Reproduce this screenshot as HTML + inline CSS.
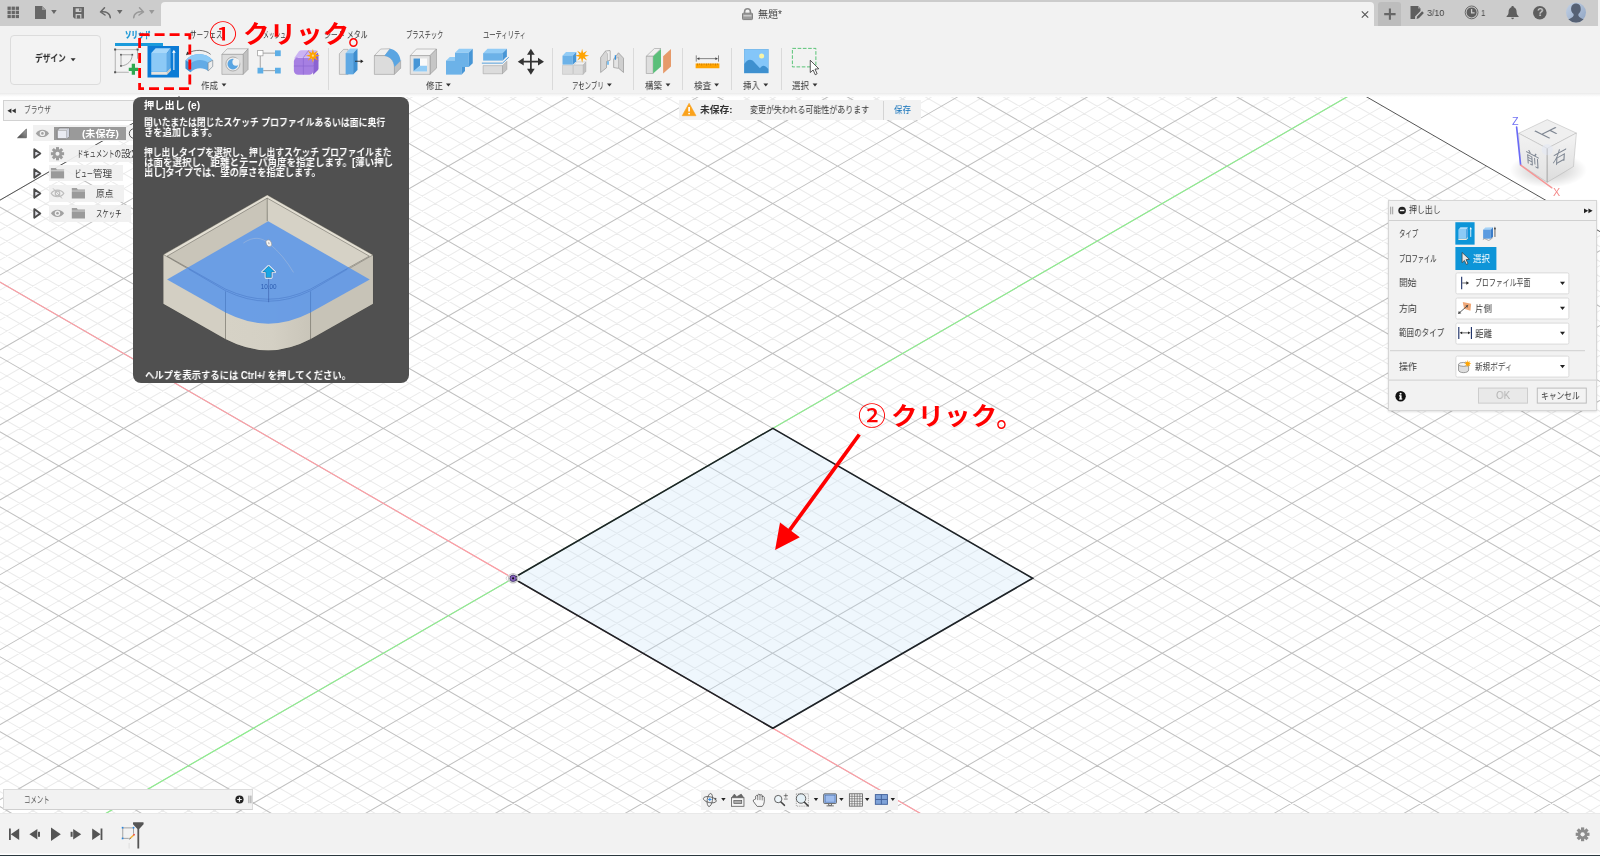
<!DOCTYPE html><html lang="ja"><head><meta charset="utf-8"><title>Fusion 360 - 押し出し</title><style>html,body{margin:0;padding:0;background:#fff;}
body{width:1600px;height:856px;overflow:hidden;font-family:"Liberation Sans","Noto Sans CJK JP",sans-serif;font-size:10px;color:#333;}
#app{position:relative;width:1600px;height:856px;overflow:hidden;background:#fff;}
#app *{box-sizing:border-box;}
.abs{position:absolute;}
svg{display:block;overflow:visible;}
#canvas{position:absolute;left:0;top:0;width:1600px;height:856px;}
#gridsvg{position:absolute;left:0;top:0;}
.t{position:absolute;white-space:nowrap;line-height:1;transform-origin:0 50%;display:block;will-change:transform;}
#topbar{position:absolute;left:0;top:0;width:1598px;height:26px;background:#ccc;}
#rstrip{position:absolute;left:1598px;top:0;width:2px;height:26px;background:#f0f0f0;}
#doctab{position:absolute;left:161px;top:2px;width:1213px;height:24px;background:#f2f2f2;border-radius:4px 4px 0 0;}
#newtab{position:absolute;left:1378px;top:2px;width:23px;height:24px;background:#bdbdbd;border-radius:3px 3px 0 0;}
#toolbar{position:absolute;left:0;top:26px;width:1600px;height:67px;background:#f2f2f2;}
#tbshadow{position:absolute;left:0;top:92.6px;width:1600px;height:4px;background:linear-gradient(#e9e9e9,#f1f1f1 25%,#f8f8f8 60%,#fff);}
#timeline{position:absolute;left:0;top:813px;width:1600px;height:42px;background:#f2f2f2;border-top:1px solid #e9e9e9;}
#botline{position:absolute;left:0;top:853px;width:1600px;height:3px;background:linear-gradient(#f2f2f2 0px,#fdfdfd 0.8px,#ffffff 1.5px,#4a565b 1.9px,#2c3a40 2.3px,#26343a 3px);}
#designbtn{position:absolute;left:10px;top:8.8px;width:90.6px;height:50.2px;border:1px solid #dcdcdc;border-radius:4px;background:#f3f3f3;}
#tabline{position:absolute;left:115px;top:17px;width:47.5px;height:3px;background:#1b9bdb;}
.tsep{position:absolute;top:22px;width:1px;height:42px;background:#dadada;}
#brhead{position:absolute;left:3.2px;top:100px;width:250px;height:20.6px;background:#f2f2f2;border:1px solid #d2d2d2;}
#notice{position:absolute;left:0;top:0;}
#notice::before{content:"";position:absolute;left:679.3px;top:100px;width:241.5px;height:19.8px;background:#f2f2f2;}
#tooltip{position:absolute;left:133px;top:97px;width:276px;height:285.5px;background:#505050;border-radius:8px;}
#ttptr{position:absolute;left:176.5px;top:95.6px;width:0;height:0;border-left:2px solid transparent;border-right:2px solid transparent;border-bottom:2px solid #505050;}
#dialog{position:absolute;left:1388px;top:200px;width:209px;height:211px;background:#f2f2f2;border:1px solid #d6d6d6;box-shadow:0 1px 2px rgba(0,0,0,0.12);}
#dlghead{position:absolute;left:0;top:19.4px;width:208px;height:1px;background:#d0d0d0;}
.dd{position:absolute;background:#fff;border:1px solid #dadada;border-radius:2px;}
.btn{position:absolute;border:1px solid #bbb;}
#comments{position:absolute;left:3px;top:789px;width:250px;height:21px;background:#f2f2f2;border:1px solid #dbdbdb;border-bottom-color:#cfcfcf;}
#navbar{position:absolute;left:701px;top:790px;width:197px;height:20px;background:#f2f2f2;}
#viewcube svg,#tooltip svg{will-change:transform;}
</style></head><body><div id="app">
<div id="canvas"><svg id="gridsvg" width="1600" height="856" viewBox="0 0 1600 856"><defs><clipPath id="gclip"><path d="M-5,202.97L772.70,-246.04L1605,234.49L1605,900L-5,900Z"/></clipPath></defs><g clip-path="url(#gclip)" fill="none"><path d="M-5,-680.06L1605,249.48M-5,-665.07L1605,264.46M-5,-650.08L1605,279.45M-5,-635.09L1605,294.44M-5,-605.12L1605,324.42M-5,-590.13L1605,339.40M-5,-575.14L1605,354.39M-5,-560.15L1605,369.38M-5,-530.18L1605,399.36M-5,-515.19L1605,414.34M-5,-500.20L1605,429.33M-5,-485.21L1605,444.32M-5,-455.24L1605,474.30M-5,-440.25L1605,489.28M-5,-425.26L1605,504.27M-5,-410.27L1605,519.26M-5,-380.30L1605,549.24M-5,-365.31L1605,564.22M-5,-350.32L1605,579.21M-5,-335.33L1605,594.20M-5,-305.36L1605,624.18M-5,-290.37L1605,639.16M-5,-275.38L1605,654.15M-5,-260.39L1605,669.14M-5,-230.42L1605,699.12M-5,-215.43L1605,714.10M-5,-200.44L1605,729.09M-5,-185.45L1605,744.08M-5,-155.48L1605,774.06M-5,-140.49L1605,789.04M-5,-125.50L1605,804.03M-5,-110.51L1605,819.02M-5,-80.54L1605,849.00M-5,-65.55L1605,863.98M-5,-50.56L1605,878.97M-5,-35.57L1605,893.96M-5,-5.60L1605,923.94M-5,9.39L1605,938.92M-5,24.38L1605,953.91M-5,39.37L1605,968.90M-5,69.34L1605,998.88M-5,84.33L1605,1013.86M-5,99.32L1605,1028.85M-5,114.31L1605,1043.84M-5,144.28L1605,1073.82M-5,159.27L1605,1088.80M-5,174.26L1605,1103.79M-5,189.25L1605,1118.78M-5,219.22L1605,1148.76M-5,234.21L1605,1163.74M-5,249.20L1605,1178.73M-5,264.19L1605,1193.72M-5,294.16L1605,1223.70M-5,309.15L1605,1238.68M-5,324.14L1605,1253.67M-5,339.13L1605,1268.66M-5,369.10L1605,1298.64M-5,384.09L1605,1313.62M-5,399.08L1605,1328.61M-5,414.07L1605,1343.60M-5,444.04L1605,1373.58M-5,459.03L1605,1388.56M-5,474.02L1605,1403.55M-5,489.01L1605,1418.54M-5,518.98L1605,1448.52M-5,533.97L1605,1463.50M-5,548.96L1605,1478.49M-5,563.95L1605,1493.48M-5,593.92L1605,1523.46M-5,608.91L1605,1538.44M-5,623.90L1605,1553.43M-5,638.89L1605,1568.42M-5,668.86L1605,1598.40M-5,683.85L1605,1613.38M-5,698.84L1605,1628.37M-5,713.83L1605,1643.36M-5,743.80L1605,1673.34M-5,758.79L1605,1688.32M-5,773.78L1605,1703.31M-5,788.77L1605,1718.30M-5,818.74L1605,1748.28M-5,833.73L1605,1763.26M-5,848.72L1605,1778.25M-5,863.71L1605,1793.24M-5,893.68L1605,1823.22M-5,908.67L1605,1838.20M-5,923.66L1605,1853.19M-5,938.65L1605,1868.18M-5,98.05L1605,-831.48M-5,113.04L1605,-816.50M-5,143.01L1605,-786.52M-5,158.00L1605,-771.53M-5,172.99L1605,-756.54M-5,187.98L1605,-741.56M-5,217.95L1605,-711.58M-5,232.94L1605,-696.59M-5,247.93L1605,-681.60M-5,262.92L1605,-666.62M-5,292.89L1605,-636.64M-5,307.88L1605,-621.65M-5,322.87L1605,-606.66M-5,337.86L1605,-591.68M-5,367.83L1605,-561.70M-5,382.82L1605,-546.71M-5,397.81L1605,-531.72M-5,412.80L1605,-516.74M-5,442.77L1605,-486.76M-5,457.76L1605,-471.77M-5,472.75L1605,-456.78M-5,487.74L1605,-441.80M-5,517.71L1605,-411.82M-5,532.70L1605,-396.83M-5,547.69L1605,-381.84M-5,562.68L1605,-366.86M-5,592.65L1605,-336.88M-5,607.64L1605,-321.89M-5,622.63L1605,-306.90M-5,637.62L1605,-291.92M-5,667.59L1605,-261.94M-5,682.58L1605,-246.95M-5,697.57L1605,-231.96M-5,712.56L1605,-216.98M-5,742.53L1605,-187.00M-5,757.52L1605,-172.01M-5,772.51L1605,-157.02M-5,787.50L1605,-142.04M-5,817.47L1605,-112.06M-5,832.46L1605,-97.07M-5,847.45L1605,-82.08M-5,862.44L1605,-67.10M-5,892.41L1605,-37.12M-5,907.40L1605,-22.13M-5,922.39L1605,-7.14M-5,937.38L1605,7.84M-5,967.35L1605,37.82M-5,982.34L1605,52.81M-5,997.33L1605,67.80M-5,1012.32L1605,82.78M-5,1042.29L1605,112.76M-5,1057.28L1605,127.75M-5,1072.27L1605,142.74M-5,1087.26L1605,157.72M-5,1117.23L1605,187.70M-5,1132.22L1605,202.69M-5,1147.21L1605,217.68M-5,1162.20L1605,232.66M-5,1192.17L1605,262.64M-5,1207.16L1605,277.63M-5,1222.15L1605,292.62M-5,1237.14L1605,307.60M-5,1267.11L1605,337.58M-5,1282.10L1605,352.57M-5,1297.09L1605,367.56M-5,1312.08L1605,382.54M-5,1342.05L1605,412.52M-5,1357.04L1605,427.51M-5,1372.03L1605,442.50M-5,1387.02L1605,457.48M-5,1416.99L1605,487.46M-5,1431.98L1605,502.45M-5,1446.97L1605,517.44M-5,1461.96L1605,532.42M-5,1491.93L1605,562.40M-5,1506.92L1605,577.39M-5,1521.91L1605,592.38M-5,1536.90L1605,607.36M-5,1566.87L1605,637.34M-5,1581.86L1605,652.33M-5,1596.85L1605,667.32M-5,1611.84L1605,682.30M-5,1641.81L1605,712.28M-5,1656.80L1605,727.27M-5,1671.79L1605,742.26M-5,1686.78L1605,757.24M-5,1716.75L1605,787.22M-5,1731.74L1605,802.21M-5,1746.73L1605,817.20" stroke="#ebebeb" stroke-width="1.02"/><path d="M-5,-620.11L1605,309.43M-5,-545.17L1605,384.37M-5,-470.23L1605,459.31M-5,-395.29L1605,534.25M-5,-320.35L1605,609.19M-5,-245.41L1605,684.13M-5,-170.47L1605,759.07M-5,-95.53L1605,834.01M-5,-20.59L1605,908.95M-5,54.35L1605,983.89M-5,129.29L1605,1058.83M-5,204.23L1605,1133.77M-5,279.17L1605,1208.71M-5,354.11L1605,1283.65M-5,429.05L1605,1358.59M-5,503.99L1605,1433.53M-5,578.93L1605,1508.47M-5,653.87L1605,1583.41M-5,728.81L1605,1658.35M-5,803.75L1605,1733.29M-5,878.69L1605,1808.23M-5,128.03L1605,-801.51M-5,202.97L1605,-726.57M-5,277.91L1605,-651.63M-5,352.85L1605,-576.69M-5,427.79L1605,-501.75M-5,502.73L1605,-426.81M-5,577.67L1605,-351.87M-5,652.61L1605,-276.93M-5,727.55L1605,-201.99M-5,802.49L1605,-127.05M-5,877.43L1605,-52.11M-5,952.37L1605,22.83M-5,1027.31L1605,97.77M-5,1102.25L1605,172.71M-5,1177.19L1605,247.65M-5,1252.13L1605,322.59M-5,1327.07L1605,397.53M-5,1402.01L1605,472.47M-5,1476.95L1605,547.41M-5,1551.89L1605,622.35M-5,1626.83L1605,697.29M-5,1701.77L1605,772.23" stroke="#c0c0c0" stroke-width="1.02"/><path d="M-5,279.17L1605,1208.71" stroke="#ff9ca3" stroke-width="1.15"/><path d="M-5,877.43L1605,-52.11" stroke="#8cf08c" stroke-width="1.15"/></g><path d="M-5,-695.05L1605,234.49" stroke="#4c4c4c" stroke-width="0.95" fill="none"/><path d="M-5,202.97L772.70,-246.04" stroke="#4c4c4c" stroke-width="0.95" fill="none"/><path d="M513.10,578.30L772.89,428.31L1032.68,578.30L772.89,728.29Z" fill="rgba(190,224,248,0.25)" stroke="#1d2226" stroke-width="1.6" stroke-linejoin="miter"/><circle cx="513.1" cy="578.3" r="4.6" fill="none" stroke="#c4c4c4" stroke-width="1.2"/><ellipse cx="513.1" cy="578.3" rx="7" ry="3.6" fill="none" stroke="#d6d6d6" stroke-width="1"/><circle cx="513.1" cy="578.3" r="3.2" fill="#8a63c0" stroke="#3a3060" stroke-width="0.8"/><circle cx="513.1" cy="578.3" r="1.1" fill="#111"/></svg></div>
<div id="topbar"><svg class="abs" style="left:7px;top:6px;" width="13" height="14" viewBox="-0.50 -0.60 13 14"><rect x="0.0" y="0.0" width="3.3" height="3.3" fill="#676767"/><rect x="4.1" y="0.0" width="3.3" height="3.3" fill="#676767"/><rect x="8.2" y="0.0" width="3.3" height="3.3" fill="#676767"/><rect x="0.0" y="4.1" width="3.3" height="3.3" fill="#676767"/><rect x="4.1" y="4.1" width="3.3" height="3.3" fill="#676767"/><rect x="8.2" y="4.1" width="3.3" height="3.3" fill="#676767"/><rect x="0.0" y="8.2" width="3.3" height="3.3" fill="#676767"/><rect x="4.1" y="8.2" width="3.3" height="3.3" fill="#676767"/><rect x="8.2" y="8.2" width="3.3" height="3.3" fill="#676767"/></svg><svg class="abs" style="left:35px;top:6px;" width="12" height="14" viewBox="0.00 0.00 12 14"><path d="M0,0H7L11,4V13H0Z" fill="#676767"/><path d="M7,0V4H11" fill="#9a9a9a"/></svg><svg class="abs" style="left:51px;top:10px;" width="7" height="5" viewBox="-0.20 0.00 7 5"><path d="M0,0H5.5L2.75,4Z" fill="#676767"/></svg><svg class="abs" style="left:73px;top:7px;" width="12" height="13" viewBox="0.00 0.00 12 13"><path d="M0,0H11V11.5H1.5L0,10Z" fill="#676767"/><rect x="2.6" y="1.4" width="5.8" height="3.6" fill="#ccc"/><rect x="6.2" y="1.4" width="1.3" height="2.6" fill="#676767"/><rect x="2.6" y="7" width="5.8" height="4.5" fill="#ccc"/><rect x="3.8" y="8.2" width="3.4" height="3.3" fill="#676767"/></svg><svg class="abs" style="left:99px;top:6px;" width="15" height="15" viewBox="0.00 0.00 15 15"><path d="M5.5,1.8L1.5,6L6,9M1.8,6C7,5.2 11,7 11.3,11.8" fill="none" stroke="#676767" stroke-width="1.5" stroke-linejoin="round" stroke-linecap="round"/></svg><svg class="abs" style="left:117px;top:10px;" width="7" height="5" viewBox="0.00 0.00 7 5"><path d="M0,0H5.5L2.75,4Z" fill="#676767"/></svg><svg class="abs" style="left:132px;top:6px;" width="15" height="15" viewBox="0.00 0.00 15 15"><path d="M7.5,1.8L11.5,6L7,9M11.2,6C6,5.2 2,7 1.7,11.8" fill="none" stroke="#989898" stroke-width="1.5" stroke-linejoin="round" stroke-linecap="round"/></svg><svg class="abs" style="left:149px;top:10px;" width="7" height="5" viewBox="0.00 0.00 7 5"><path d="M0,0H5.5L2.75,4Z" fill="#989898"/></svg><div id="doctab"></div><svg class="abs" style="left:742px;top:8px;" width="12" height="13" viewBox="0.00 0.00 12 13"><path d="M2.6,5.5V3.6A2.9,2.9 0 0 1 8.4,3.6V5.5" fill="none" stroke="#8a8a8a" stroke-width="1.6"/><rect x="0.5" y="5.2" width="10" height="6.4" rx="0.8" fill="#9b9b9b" stroke="#808080" stroke-width="1"/><rect x="1.5" y="7.2" width="8" height="1.2" fill="#d6d6d6"/></svg><span class="t" style="left:758.2px;top:10.1px;font-size:10px;font-weight:400;color:#444;transform:scaleX(1.004);">無題*</span><svg class="abs" style="left:1361px;top:11px;" width="9" height="8" viewBox="-0.50 0.00 9 8"><path d="M0.3,0.3L6.7,6.7M6.7,0.3L0.3,6.7" stroke="#555" stroke-width="1.1" fill="none"/></svg><div id="newtab"></div><svg class="abs" style="left:1384px;top:8px;" width="13" height="13" viewBox="-0.20 -0.40 13 13"><path d="M5.7,0V11.4M0,5.7H11.4" stroke="#666" stroke-width="2.1" fill="none"/></svg><svg class="abs" style="left:1410px;top:6px;" width="15" height="14" viewBox="-0.50 0.00 15 14"><path d="M0,0H7.5L10,2.6V5L4.6,10.6V13H0Z" fill="#5e5e5e"/><path d="M6,12.9L6.6,10.4L11.6,5.2L13.4,6.9L8.4,12.2Z" fill="#5e5e5e"/><path d="M7.5,0V2.6H10" fill="#9a9a9a"/></svg><span class="t" style="left:1426.6px;top:8.1px;font-size:9.5px;font-weight:400;color:#444;font-family:'Liberation Sans',sans-serif;transform:scaleX(0.930);">3/10</span><svg class="abs" style="left:1464px;top:5px;" width="16" height="16" viewBox="-0.60 -0.40 16 16"><circle cx="7" cy="7" r="6.4" fill="none" stroke="#5e5e5e" stroke-width="0.9"/><circle cx="7" cy="7" r="5" fill="#5e5e5e"/><path d="M7,3.6V7.4H10" stroke="#ccc" stroke-width="1.3" fill="none"/></svg><span class="t" style="left:1480.8px;top:8.1px;font-size:9.5px;font-weight:400;color:#444;font-family:'Liberation Sans',sans-serif;transform:scaleX(0.831);">1</span><svg class="abs" style="left:1506px;top:6px;" width="14" height="15" viewBox="-0.60 0.00 14 15"><path d="M6,0C6.9,0 7.2,0.6 7.2,1.2C9.4,1.9 10,4 10,6C10,8.4 11,9.3 12,10.2V11H0V10.2C1,9.3 2,8.4 2,6C2,4 2.6,1.9 4.8,1.2C4.8,0.6 5.1,0 6,0Z" fill="#5e5e5e"/><path d="M4.6,11.8H7.4A1.4,1.4 0 0 1 4.6,11.8Z" fill="#5e5e5e"/></svg><svg class="abs" style="left:1533px;top:6px;" width="15" height="15" viewBox="0.00 0.00 15 15"><circle cx="6.8" cy="6.8" r="6.8" fill="#5e5e5e"/></svg><span class="t" style="left:1536.6px;top:7.2px;font-size:11.5px;font-weight:700;color:#ccc;font-family:'Liberation Sans',sans-serif;transform:scaleX(0.939);">?</span><svg class="abs" style="left:1565px;top:2px;" width="23" height="22" viewBox="-0.80 -0.40 23 22"><defs><linearGradient id="avg" x1="0" y1="0" x2="1" y2="1"><stop offset="0" stop-color="#c3d2e6"/><stop offset="1" stop-color="#8ea3c2"/></linearGradient><clipPath id="avc"><circle cx="10.2" cy="10.2" r="10"/></clipPath></defs><circle cx="10.2" cy="10.2" r="10" fill="url(#avg)"/><g clip-path="url(#avc)" fill="#566174"><path d="M10.2,1.2C13.6,1 15.2,3.8 14.9,6.4C15.2,8.2 14.4,10.2 12.6,11.6V13.4C13.4,15.4 16.4,16.4 18.6,17.2V21H1.8V17.2C4,16.4 7,15.4 7.8,13.4V11.6C5.6,10.4 5,7.4 5.4,5.4C5.6,2.8 7.6,1.2 10.2,1.2Z"/></g></svg></div><div id="rstrip"></div>
<div id="toolbar"><div id="designbtn"></div><span class="t" style="left:35.0px;top:27.8px;font-size:10px;font-weight:700;color:#2e2e2e;transform:scaleX(0.770);">デザイン</span><svg class="abs" style="left:70px;top:32px;" width="7" height="5" viewBox="-0.60 -0.20 7 5"><path d="M0,0H5L2.5,3Z" fill="#2e2e2e"/></svg><span class="t" style="left:125.0px;top:4.0px;font-size:9.5px;font-weight:700;color:#0890d4;transform:scaleX(0.673);-webkit-text-stroke:0.35px #0890d4;">ソリッド</span><div id="tabline"></div><span class="t" style="left:190.0px;top:4.0px;font-size:9.5px;font-weight:400;color:#3a3a3a;transform:scaleX(0.692);">サーフェス</span><span class="t" style="left:263.0px;top:4.0px;font-size:9.5px;font-weight:400;color:#3a3a3a;transform:scaleX(0.605);">メッシュ</span><span class="t" style="left:324.0px;top:4.0px;font-size:9.5px;font-weight:400;color:#3a3a3a;transform:scaleX(0.729);">シート メタル</span><span class="t" style="left:405.6px;top:4.0px;font-size:9.5px;font-weight:400;color:#3a3a3a;transform:scaleX(0.658);">プラスチック</span><span class="t" style="left:483.0px;top:4.0px;font-size:9.5px;font-weight:400;color:#3a3a3a;transform:scaleX(0.658);">ユーティリティ</span><span class="t" style="left:201.0px;top:54.8px;font-size:9.5px;font-weight:400;color:#3a3a3a;transform:scaleX(0.894);">作成</span><svg class="abs" style="left:221px;top:57px;" width="7" height="5" viewBox="-0.60 -0.40 7 5"><path d="M0,0H4.8L2.4,3.2Z" fill="#333"/></svg><span class="t" style="left:425.6px;top:54.8px;font-size:9.5px;font-weight:400;color:#3a3a3a;transform:scaleX(0.889);">修正</span><svg class="abs" style="left:446px;top:57px;" width="6" height="5" viewBox="0.00 -0.40 6 5"><path d="M0,0H4.8L2.4,3.2Z" fill="#333"/></svg><span class="t" style="left:572.0px;top:54.8px;font-size:9.5px;font-weight:400;color:#3a3a3a;transform:scaleX(0.676);">アセンブリ</span><svg class="abs" style="left:607px;top:57px;" width="6" height="5" viewBox="0.00 -0.40 6 5"><path d="M0,0H4.8L2.4,3.2Z" fill="#333"/></svg><span class="t" style="left:645.0px;top:54.8px;font-size:9.5px;font-weight:400;color:#3a3a3a;transform:scaleX(0.894);">構築</span><svg class="abs" style="left:665px;top:57px;" width="7" height="5" viewBox="-0.60 -0.40 7 5"><path d="M0,0H4.8L2.4,3.2Z" fill="#333"/></svg><span class="t" style="left:693.8px;top:54.8px;font-size:9.5px;font-weight:400;color:#3a3a3a;transform:scaleX(0.905);">検査</span><svg class="abs" style="left:714px;top:57px;" width="7" height="5" viewBox="-0.20 -0.40 7 5"><path d="M0,0H4.8L2.4,3.2Z" fill="#333"/></svg><span class="t" style="left:743.0px;top:54.8px;font-size:9.5px;font-weight:400;color:#3a3a3a;transform:scaleX(0.894);">挿入</span><svg class="abs" style="left:763px;top:57px;" width="7" height="5" viewBox="-0.40 -0.40 7 5"><path d="M0,0H4.8L2.4,3.2Z" fill="#333"/></svg><span class="t" style="left:792.0px;top:54.8px;font-size:9.5px;font-weight:400;color:#3a3a3a;transform:scaleX(0.894);">選択</span><svg class="abs" style="left:812px;top:57px;" width="7" height="5" viewBox="-0.60 -0.40 7 5"><path d="M0,0H4.8L2.4,3.2Z" fill="#333"/></svg><div class="tsep" style="left:328.0px"></div><div class="tsep" style="left:552.0px"></div><div class="tsep" style="left:632.5px"></div><div class="tsep" style="left:681.5px"></div><div class="tsep" style="left:731.0px"></div><div class="tsep" style="left:780.5px"></div><svg class="abs" style="left:113px;top:21px;" width="27" height="29" viewBox="113 47 27 29"><g transform="translate(0,0) scale(0.12500)"><path d="M922,397H1100V470M922,397V578H1030" fill="none" stroke="#8a8a8a" stroke-width="5"/><rect x="913" y="388" width="16" height="16" fill="#555"/><rect x="1093" y="388" width="16" height="16" fill="#555"/><rect x="913" y="570" width="16" height="16" fill="#555"/><path d="M968,438H1058C1056,490 1020,522 968,528Z" fill="none" stroke="#7c7c7c" stroke-width="5"/><rect x="961" y="431" width="13" height="13" fill="#555"/><rect x="1052" y="431" width="13" height="13" fill="#555"/><rect x="961" y="521" width="13" height="13" fill="#555"/><path d="M1067,510V598M1030,554H1105" stroke="#2fa84f" stroke-width="26" fill="none"/></g></svg><svg class="abs" style="left:147px;top:20px;" width="32" height="32" viewBox="147 46 32 32"><g transform="translate(0,0) scale(0.12500)"><rect x="1180" y="368" width="252" height="252" fill="#0c7bd5"/><path d="M1210,424L1245,386L1365,386L1335,424Z" fill="#a8d8fa" /><path d="M1210,424L1335,424L1335,575L1210,575Z" fill="#8cc9f6" /><path d="M1335,424L1365,386L1365,545L1335,575Z" fill="#5eaae6" /><path d="M1210,575L1335,575L1365,545L1365,565L1335,598L1210,598Z" fill="#e8e4de" /><path d="M1335,575L1365,545L1365,565L1335,598Z" fill="#cdc9c2" /><path d="M1391,560V415" stroke="#fff" stroke-width="8" fill="none"/><path d="M1376,422L1391,398L1406,422Z" fill="#fff"/></g></svg><svg class="abs" style="left:185px;top:21px;" width="29" height="28" viewBox="185 47 29 28"><g transform="translate(180,20) scale(0.12500)"><path d="M45,322C100,255 205,255 262,322L262,372L225,408C190,375 120,378 85,418L45,388Z" fill="#62abe6"/><path d="M45,322C100,255 205,255 262,322L225,342C190,310 120,312 85,348Z" fill="#8ccaf6"/><path d="M45,322L85,348V418L45,388Z" fill="#3f8dd0"/><path d="M225,342L262,322L262,372L225,408Z" fill="#ececec" stroke="#777" stroke-width="4" stroke-linejoin="round" /><path d="M62,268C115,232 200,235 245,275" fill="none" stroke="#333" stroke-width="5"/><path d="M48,282L58,252L80,272Z" fill="#333"/></g></svg><svg class="abs" style="left:221px;top:21px;" width="28" height="29" viewBox="221 47 28 29"><g transform="translate(180,20) scale(0.12500)"><path d="M335,275L378,230L545,230L505,275Z" fill="#efefef" stroke="#8c8c8c" stroke-width="4" stroke-linejoin="round" /><path d="M505,275L545,230L545,395L505,435Z" fill="#c2c2c2" stroke="#8c8c8c" stroke-width="4" stroke-linejoin="round" /><path d="M335,275L505,275L505,435L335,435Z" fill="#dcdcdc" stroke="#8c8c8c" stroke-width="4" stroke-linejoin="round" /><circle cx="423" cy="352" r="56" fill="#ececec" stroke="#8c8c8c" stroke-width="5"/><circle cx="423" cy="352" r="43" fill="#5aa5e2"/><circle cx="448" cy="336" r="29" fill="#f2f2f2"/></g></svg><svg class="abs" style="left:257px;top:23px;" width="25" height="26" viewBox="257 49 25 26"><g transform="translate(180,20) scale(0.12500)"><path d="M665,265H760M642,288V382M665,405H760" stroke="#555" stroke-width="4" fill="none"/><rect x="622" y="245" width="42" height="42" fill="#fff" stroke="#777" stroke-width="4"/><rect x="760" y="243" width="46" height="46" fill="#5daee6"/><rect x="620" y="382" width="46" height="46" fill="#5daee6"/><rect x="760" y="382" width="46" height="46" fill="#5daee6"/></g></svg><svg class="abs" style="left:292px;top:20px;" width="29" height="30" viewBox="292 46 29 30"><g transform="translate(180,20) scale(0.12500)"><path d="M1065,300L1098,262Q1108,262 1108,282V385Q1108,396 1100,404L1065,437Z" fill="#8b62d2"/><path d="M913,305L950,252Q958,242 975,242H1085Q1106,242 1098,264L1065,302Z" fill="#cbb3f3"/><rect x="911" y="298" width="156" height="139" rx="34" fill="#a67fe2"/><path d="M940,300H1040Q1066,300 1067,330" fill="none" stroke="#dccdf8" stroke-width="6"/><path d="M987,300V437M911,368H1067M1067,368L1108,325M1030,242L987,300" stroke="#8a63cf" stroke-width="5" fill="none"/><path d="M1063.0,229.0L1071.4,264.7L1102.6,245.4L1083.3,276.6L1119.0,285.0L1083.3,293.4L1102.6,324.6L1071.4,305.3L1063.0,341.0L1054.6,305.3L1023.4,324.6L1042.7,293.4L1007.0,285.0L1042.7,276.6L1023.4,245.4L1054.6,264.7Z" fill="#ffa400" /><circle cx="1063" cy="285" r="9" fill="#ffd98a"/></g></svg><svg class="abs" style="left:338px;top:21px;" width="27" height="29" viewBox="338 47 27 29"><g transform="translate(180,20) scale(0.12500)"><path d="M1275,270L1308,235L1345,235L1345,435L1275,435Z" fill="#e2e2e2" stroke="#8c8c8c" stroke-width="4" stroke-linejoin="round" /><path d="M1325,265L1360,228L1420,228L1385,265Z" fill="#92ccf6" /><path d="M1325,265L1385,265L1385,435L1325,435Z" fill="#5fa9e4" /><path d="M1385,265L1420,228L1420,400L1385,435Z" fill="#3f8fd0" /><path d="M1400,330H1450" stroke="#222" stroke-width="7"/><path d="M1445,315L1468,330L1445,345Z" fill="#222"/></g></svg><svg class="abs" style="left:373px;top:21px;" width="29" height="29" viewBox="373 47 29 29"><g transform="translate(360,20) scale(0.12500)"><path d="M115,285L165,232L240,230L200,285Z" fill="#efefef" stroke="#8c8c8c" stroke-width="4" stroke-linejoin="round" /><path d="M275,375L325,325V385L275,435Z" fill="#c2c2c2" stroke="#8c8c8c" stroke-width="4"/><path d="M115,285H195C240,290 272,325 275,375V435H115Z" fill="#dcdcdc" stroke="#8c8c8c" stroke-width="4"/><path d="M195,285C240,290 272,325 275,375L325,325C318,272 285,238 240,230Z" fill="#5aa5e2"/></g></svg><svg class="abs" style="left:409px;top:21px;" width="30" height="29" viewBox="409 47 30 29"><g transform="translate(360,20) scale(0.12500)"><path d="M402,285L452,232L612,232L560,285Z" fill="#f4f4f4" stroke="#8c8c8c" stroke-width="4" stroke-linejoin="round" /><path d="M560,285L612,232L612,385L560,435Z" fill="#c6c6c6" stroke="#8c8c8c" stroke-width="4" stroke-linejoin="round" /><path d="M402,285L560,285L560,435L402,435Z" fill="#e4e4e4" stroke="#8c8c8c" stroke-width="4" stroke-linejoin="round" /><rect x="428" y="308" width="108" height="104" fill="#fafafa"/><path d="M428,308L480,308L480,365L428,412Z" fill="#4796d6" /><path d="M428,412L480,365L536,365L536,412Z" fill="#92ccf6" /></g></svg><svg class="abs" style="left:445px;top:21px;" width="29" height="29" viewBox="445 47 29 29"><g transform="translate(360,20) scale(0.12500)"><path d="M760,262L792,230L902,230L870,262Z" fill="#92ccf6" /><path d="M760,262L870,262L870,375L760,375Z" fill="#6cb2e8" /><path d="M870,262L902,230L902,345L870,375Z" fill="#4796d6" /><path d="M688,325L718,295L760,295L760,325Z" fill="#92ccf6" /><path d="M688,325L812,325L812,437L688,437Z" fill="#6cb2e8" /><path d="M812,375L840,347L840,408L812,437Z" fill="#4796d6" /><path d="M760,325L812,325L812,375L870,375L870,345L760,345Z" fill="#6cb2e8" /></g></svg><svg class="abs" style="left:481px;top:21px;" width="29" height="29" viewBox="481 47 29 29"><g transform="translate(360,20) scale(0.12500)"><path d="M985,265L1020,230L1175,230L1140,265Z" fill="#92ccf6" /><path d="M985,265L1140,265L1140,325L985,325Z" fill="#6cb2e8" /><path d="M1140,265L1175,230L1175,290L1140,325Z" fill="#4796d6" /><path d="M985,365L1140,365L1140,430L985,430Z" fill="#dcdcdc" stroke="#9a9a9a" stroke-width="4" stroke-linejoin="round" /><path d="M1140,365L1175,330L1175,395L1140,430Z" fill="#c2c2c2" stroke="#9a9a9a" stroke-width="4" stroke-linejoin="round" /><path d="M975,345H1140L1190,298" fill="none" stroke="#3f93d8" stroke-width="7"/></g></svg><svg class="abs" style="left:517px;top:21px;" width="28" height="29" viewBox="517 47 28 29"><g transform="translate(360,20) scale(0.12500)"><path d="M1367,270V395M1305,333H1430" stroke="#333" stroke-width="14" fill="none"/><path d="M1367,230L1398,278H1336ZM1367,438L1398,390H1336ZM1262,333L1310,302V364ZM1472,333L1424,302V364Z" fill="#333"/></g></svg><svg class="abs" style="left:561px;top:21px;" width="29" height="29" viewBox="561 47 29 29"><g transform="translate(540,20) scale(0.12500)"><path d="M180,285L208,255L290,255L262,285Z" fill="#92ccf6" /><path d="M180,285L262,285L262,357L180,357Z" fill="#6cb2e8" /><path d="M262,285L290,255L290,330L262,357Z" fill="#4796d6" /><path d="M268,360L295,335L368,335L345,360Z" fill="#f2f2f2" stroke="#aaa" stroke-width="3" stroke-linejoin="round" /><path d="M345,360L368,335L368,410L345,435Z" fill="#c2c2c2" stroke="#aaa" stroke-width="3" stroke-linejoin="round" /><path d="M180,362L262,362L262,435L180,435Z" fill="#dcdcdc" stroke="#aaa" stroke-width="3" stroke-linejoin="round" /><path d="M268,362L345,362L345,435L268,435Z" fill="#dcdcdc" stroke="#aaa" stroke-width="3" stroke-linejoin="round" /><path d="M337.0,229.0L345.4,264.7L376.6,245.4L357.3,276.6L393.0,285.0L357.3,293.4L376.6,324.6L345.4,305.3L337.0,341.0L328.6,305.3L297.4,324.6L316.7,293.4L281.0,285.0L316.7,276.6L297.4,245.4L328.6,264.7Z" fill="#ffa400" /></g></svg><svg class="abs" style="left:599px;top:22px;" width="26" height="27" viewBox="599 48 26 27"><g transform="translate(540,20) scale(0.12500)"><path d="M485,300L522,250L560,245L560,322L532,332L532,382L485,420Z" fill="#d6d6d6" stroke="#8c8c8c" stroke-width="5" stroke-linejoin="round" /><path d="M522,250L560,245L560,322L540,325L540,270Z" fill="#eee" stroke="#8c8c8c" stroke-width="3" stroke-linejoin="round" /><path d="M590,312L628,262L668,305L668,420L628,385L590,380Z" fill="#cfcfcf" stroke="#8c8c8c" stroke-width="5" stroke-linejoin="round" /><path d="M590,312L628,300L628,385L590,380Z" fill="#e4e4e4" stroke="#8c8c8c" stroke-width="3" stroke-linejoin="round" /><rect x="538" y="330" width="12" height="28" fill="#58b0f0"/><rect x="598" y="282" width="10" height="36" fill="#2f8fe0"/></g></svg><svg class="abs" style="left:645px;top:21px;" width="27" height="29" viewBox="645 47 27 29"><g transform="translate(540,20) scale(0.12500)"><path d="M850,290L915,228L968,228L905,290Z" fill="#f0f0f0" stroke="#8c8c8c" stroke-width="4" stroke-linejoin="round" /><path d="M850,290L905,290L905,428L850,428Z" fill="#dedede" stroke="#8c8c8c" stroke-width="4" stroke-linejoin="round" /><path d="M905,290L968,232L968,372L905,428Z" fill="#5bbf7a" /><path d="M985,290L1048,232L1048,372L985,428Z" fill="#e69a6a" /></g></svg><svg class="abs" style="left:695px;top:28px;" width="25" height="16" viewBox="695 54 25 16"><g transform="translate(540,20) scale(0.12500)"><rect x="1245" y="348" width="190" height="38" fill="#ffa400"/><rect x="1256" y="348" width="5" height="16" fill="#b86e00"/><rect x="1274" y="348" width="5" height="10" fill="#b86e00"/><rect x="1292" y="348" width="5" height="16" fill="#b86e00"/><rect x="1310" y="348" width="5" height="10" fill="#b86e00"/><rect x="1328" y="348" width="5" height="16" fill="#b86e00"/><rect x="1346" y="348" width="5" height="10" fill="#b86e00"/><rect x="1364" y="348" width="5" height="16" fill="#b86e00"/><rect x="1382" y="348" width="5" height="10" fill="#b86e00"/><rect x="1400" y="348" width="5" height="16" fill="#b86e00"/><rect x="1418" y="348" width="5" height="10" fill="#b86e00"/><path d="M1250,283V333M1428,283V333M1262,309H1416" stroke="#444" stroke-width="5" fill="none"/><path d="M1254,309L1275,298V320ZM1424,309L1403,298V320Z" fill="#444"/></g></svg><svg class="abs" style="left:743px;top:22px;" width="26" height="26" viewBox="743 48 26 26"><g transform="translate(720,20) scale(0.12500)"><rect x="194" y="234" width="192" height="190" fill="#84c6f9" stroke="#5aa7e3" stroke-width="4"/><path d="M194,424V352C222,310 252,306 282,346L320,386C336,360 356,356 386,392V424Z" fill="#3e90cf"/><circle cx="333" cy="288" r="20" fill="#f8f4a6"/></g></svg><svg class="abs" style="left:791px;top:21px;" width="30" height="30" viewBox="791 47 30 30"><g transform="translate(720,20) scale(0.12500)"><rect x="579" y="227" width="188" height="148" fill="none" stroke="#43bd65" stroke-width="7" stroke-dasharray="29 13"/><path d="M722,322V420L745,400L762,438L777,430L760,393L790,390Z" fill="#fff" stroke="#222" stroke-width="6" stroke-linejoin="round"/></g></svg></div><div id="tbshadow"></div>
<div id="browser"><div id="brhead"></div><svg class="abs" style="left:7px;top:108px;" width="10" height="7" viewBox="-0.40 -0.40 10 7"><path d="M4,0V4.8L0,2.4ZM8.4,0V4.8L4.4,2.4Z" fill="#333"/></svg><span class="t" style="left:23.6px;top:105.0px;font-size:9.5px;font-weight:400;color:#555;transform:scaleX(0.708);">ブラウザ</span><div class="abs" style="left:33.1px;top:124.9px;width:110px;height:16.6px;background:rgba(240,240,240,0.93)"></div><svg class="abs" style="left:17px;top:128px;" width="11" height="12" viewBox="-0.20 -0.80 11 12"><defs><linearGradient id="trg" x1="0" y1="1" x2="1" y2="0"><stop offset="0" stop-color="#444"/><stop offset="1" stop-color="#aaa"/></linearGradient></defs><path d="M0.3,9H9.2V0.2Z" fill="url(#trg)" stroke="#444" stroke-width="0.6"/></svg><svg class="abs" style="left:35px;top:129px;" width="15" height="10" viewBox="-0.80 -0.60 15 10"><path d="M0,3.8C3,-1 10.2,-1 13.2,3.8C10.2,8.6 3,8.6 0,3.8Z" fill="#a2a2a2"/><circle cx="6.6" cy="3.8" r="2.7" fill="#f0f0f0"/><circle cx="6.6" cy="3.8" r="1.3" fill="#a2a2a2"/></svg><div class="abs" style="left:54px;top:127.1px;width:71.8px;height:12.5px;background:#9a9a9a"></div><svg class="abs" style="left:56px;top:127px;" width="15" height="14" viewBox="-0.70 -0.60 15 14"><path d="M0.5,2.6L3,0.4H12.3V8.6L9.8,11.2H0.5Z" fill="#e9ebf2" stroke="#7a7a7a" stroke-width="0.9" stroke-linejoin="round"/><path d="M0.5,2.6H9.8V11.2M9.8,2.6L12.3,0.4" fill="none" stroke="#9a9a9a" stroke-width="0.8"/><path d="M9.8,2.6L12.3,0.4V8.6L9.8,11.2Z" fill="#cfd3de"/></svg><span class="t" style="left:82.0px;top:128.7px;font-size:9.5px;font-weight:700;color:#fff;transform:scaleX(1.057);">(未保存)</span><svg class="abs" style="left:128px;top:128px;" width="13" height="12" viewBox="-0.60 0.00 13 12"><circle cx="5.5" cy="5.5" r="4.8" fill="#f4f4f4" stroke="#555" stroke-width="1"/></svg><div class="abs" style="left:48.5px;top:145.2px;width:97px;height:16.5px;background:rgba(240,240,240,0.93)"></div><svg class="abs" style="left:33px;top:147px;" width="10" height="14" viewBox="-0.00 -0.90 10 14"><path d="M1.3,1.3L7.3,5.6L1.3,9.9Z" fill="#e2e2ea" stroke="#4a4a4a" stroke-width="1.9" stroke-linejoin="round"/></svg><svg class="abs" style="left:50px;top:147px;" width="16" height="15" viewBox="-0.90 -0.10 16 15"><g transform="translate(6.6,6.6)"><rect x="-1.5" y="-6.6" width="3" height="3.2" fill="#9c9c9c" transform="rotate(0)"/><rect x="-1.5" y="-6.6" width="3" height="3.2" fill="#9c9c9c" transform="rotate(45)"/><rect x="-1.5" y="-6.6" width="3" height="3.2" fill="#9c9c9c" transform="rotate(90)"/><rect x="-1.5" y="-6.6" width="3" height="3.2" fill="#9c9c9c" transform="rotate(135)"/><rect x="-1.5" y="-6.6" width="3" height="3.2" fill="#9c9c9c" transform="rotate(180)"/><rect x="-1.5" y="-6.6" width="3" height="3.2" fill="#9c9c9c" transform="rotate(225)"/><rect x="-1.5" y="-6.6" width="3" height="3.2" fill="#9c9c9c" transform="rotate(270)"/><rect x="-1.5" y="-6.6" width="3" height="3.2" fill="#9c9c9c" transform="rotate(315)"/><circle r="4.6" fill="#9c9c9c"/><circle r="2" fill="#f0f0f0"/></g></svg><span class="t" style="left:76.7px;top:148.7px;font-size:9.5px;font-weight:400;color:#3a3a3a;transform:scaleX(0.660);">ドキュメントの</span><span class="t" style="left:121.0px;top:148.7px;font-size:9.5px;font-weight:400;color:#3a3a3a;transform:scaleX(1.052);">設定</span><div class="abs" style="left:48.5px;top:165.2px;width:74.6px;height:16.2px;background:rgba(240,240,240,0.93)"></div><svg class="abs" style="left:33px;top:167px;" width="10" height="14" viewBox="-0.00 -0.90 10 14"><path d="M1.3,1.3L7.3,5.6L1.3,9.9Z" fill="#e2e2ea" stroke="#4a4a4a" stroke-width="1.9" stroke-linejoin="round"/></svg><svg class="abs" style="left:50px;top:168px;" width="16" height="12" viewBox="-0.90 -0.00 16 12"><path d="M0,0H5L6,1.4H13.2V2.6H0Z" fill="#a0a0a0"/><rect x="0" y="3.2" width="13.2" height="7.2" fill="#9a9a9a"/></svg><span class="t" style="left:74.8px;top:168.7px;font-size:9.5px;font-weight:400;color:#3a3a3a;transform:scaleX(0.624);">ビュー</span><span class="t" style="left:93.4px;top:168.7px;font-size:9.5px;font-weight:400;color:#3a3a3a;transform:scaleX(1.010);">管理</span><div class="abs" style="left:48.5px;top:185px;width:75.2px;height:16.6px;background:rgba(240,240,240,0.93)"></div><svg class="abs" style="left:33px;top:187px;" width="10" height="14" viewBox="-0.00 -0.90 10 14"><path d="M1.3,1.3L7.3,5.6L1.3,9.9Z" fill="#e2e2ea" stroke="#4a4a4a" stroke-width="1.9" stroke-linejoin="round"/></svg><svg class="abs" style="left:50px;top:189px;" width="16" height="10" viewBox="-0.90 -0.60 16 10"><path d="M0.3,3.8C3,-0.6 10.2,-0.6 12.9,3.8C10.2,8.2 3,8.2 0.3,3.8Z" fill="none" stroke="#bdbdbd" stroke-width="1.1"/><circle cx="6.6" cy="3.8" r="2.2" fill="none" stroke="#bdbdbd" stroke-width="1.3"/><path d="M2.2,-1.2L11,8.8" stroke="#bdbdbd" stroke-width="1"/></svg><svg class="abs" style="left:71px;top:188px;" width="15" height="12" viewBox="-0.80 -0.10 15 12"><path d="M0,0H5L6,1.4H13.2V2.6H0Z" fill="#a0a0a0"/><rect x="0" y="3.2" width="13.2" height="7.2" fill="#9a9a9a"/></svg><span class="t" style="left:96.3px;top:188.7px;font-size:9.5px;font-weight:400;color:#3a3a3a;transform:scaleX(0.905);">原点</span><div class="abs" style="left:48.5px;top:205.3px;width:82.5px;height:16.5px;background:rgba(240,240,240,0.93)"></div><svg class="abs" style="left:33px;top:207px;" width="10" height="14" viewBox="-0.00 -0.80 10 14"><path d="M1.3,1.3L7.3,5.6L1.3,9.9Z" fill="#e2e2ea" stroke="#4a4a4a" stroke-width="1.9" stroke-linejoin="round"/></svg><svg class="abs" style="left:50px;top:209px;" width="16" height="10" viewBox="-0.90 -0.50 16 10"><path d="M0,3.8C3,-1 10.2,-1 13.2,3.8C10.2,8.6 3,8.6 0,3.8Z" fill="#a2a2a2"/><circle cx="6.6" cy="3.8" r="2.7" fill="#f0f0f0"/><circle cx="6.6" cy="3.8" r="1.3" fill="#a2a2a2"/></svg><svg class="abs" style="left:71px;top:208px;" width="15" height="12" viewBox="-0.80 -0.10 15 12"><path d="M0,0H5L6,1.4H13.2V2.6H0Z" fill="#a0a0a0"/><rect x="0" y="3.2" width="13.2" height="7.2" fill="#9a9a9a"/></svg><span class="t" style="left:96.3px;top:208.6px;font-size:9.5px;font-weight:400;color:#3a3a3a;transform:scaleX(0.671);">スケッチ</span></div>
<div id="notice"><svg class="abs" style="left:682px;top:103px;" width="16" height="14" viewBox="0.00 0.00 16 14"><path d="M7.1,0.3L14,12.7H0.2Z" fill="#faa21b" stroke="#faa21b" stroke-width="0.6" stroke-linejoin="round"/><path d="M7.1,4V8.6" stroke="#fff" stroke-width="1.7"/><circle cx="7.1" cy="10.6" r="0.95" fill="#fff"/></svg><span class="t" style="left:700.0px;top:105.2px;font-size:9.5px;font-weight:700;color:#333;transform:scaleX(1.029);">未保存:</span><span class="t" style="left:749.8px;top:105.2px;font-size:9.5px;font-weight:400;color:#333;transform:scaleX(0.839);">変更が失われる可能性があります</span><div class="abs" style="left:883px;top:100.5px;width:1px;height:19px;background:#d4d4d4"></div><span class="t" style="left:894.0px;top:105.2px;font-size:9.5px;font-weight:400;color:#1271ba;transform:scaleX(0.894);">保存</span></div>
<div id="tooltip"><span class="t" style="left:11.3px;top:3.6px;font-size:10px;font-weight:700;color:#fff;transform:scaleX(1.022);">押し出し (e)</span><span class="t" style="left:11.3px;top:21.2px;font-size:10px;font-weight:700;color:#fff;transform:scaleX(0.885);">開いたまたは閉じたスケッチ プロファイルあるいは面に奥行</span><span class="t" style="left:11.3px;top:31.3px;font-size:10px;font-weight:700;color:#fff;transform:scaleX(0.927);">きを追加します。</span><span class="t" style="left:11.3px;top:51.1px;font-size:10px;font-weight:700;color:#fff;transform:scaleX(0.875);">押し出しタイプを選択し、押し出すスケッチ プロファイルまた</span><span class="t" style="left:11.3px;top:61.1px;font-size:10px;font-weight:700;color:#fff;transform:scaleX(0.950);">は面を選択し、距離とテーパ角度を指定します。[薄い押し</span><span class="t" style="left:11.3px;top:71.1px;font-size:10px;font-weight:700;color:#fff;transform:scaleX(0.919);">出し]タイプでは、壁の厚さを指定します。</span><span class="t" style="left:11.5px;top:273.8px;font-size:10px;font-weight:700;color:#fff;transform:scaleX(0.933);">ヘルプを表示するには Ctrl+/ を押してください。</span><svg class="abs" style="left:27px;top:95px;" width="216" height="160" viewBox="160 192 216 160"><g transform="translate(150,185) scale(0.19869)"><defs><linearGradient id="cw" x1="0" y1="0" x2="1" y2="0"><stop offset="0" stop-color="#d6d2c6"/><stop offset="0.55" stop-color="#d4d0c4"/><stop offset="1" stop-color="#c9c5b9"/></linearGradient></defs><path d="M590,50L1122,352V598L808,775Q700,832 595,832Q490,832 380,775L68,598V350Z" fill="#d3cfc3" stroke="#4a4a46" stroke-width="3" stroke-linejoin="round"/><path d="M590,64L84,357L84,480L595,185Z" fill="#c9c5b9" /><path d="M590,64L1106,357L1106,480L595,185Z" fill="#d6d2c6" /><path d="M68,352L380,532L380,775L68,598Z" fill="#d3cfc3" /><path d="M1122,354L808,532L808,775L1122,598Z" fill="#c7c3b7" /><path d="M380,532Q490,585 595,585Q700,585 808,532V775Q700,832 595,832Q490,832 380,775Z" fill="url(#cw)"/><path d="M68,350L590,50L1122,352L808,532Q700,585 595,585Q490,585 380,532Z M86,358L380,524Q490,575 595,575Q700,575 808,524L1104,358L590,66Z" fill="#e3dfd3" fill-rule="evenodd" stroke="#55534c" stroke-width="2.4" stroke-linejoin="round"/><path d="M590,66V182M380,536V775M808,536V775" stroke="#55534c" stroke-width="2.6" fill="none"/><path d="M595,182L1106,476L808,642Q700,698 595,698Q490,698 380,642L86,476Z" fill="#5f98e8" fill-opacity="0.9"/><path d="M188,416L380,524Q490,575 595,575Q700,575 808,524L1000,416" fill="none" stroke="#3f6fc0" stroke-width="2.2" stroke-opacity="0.8"/><path d="M196,424L380,532Q490,585 595,585Q700,585 808,532L992,424" fill="none" stroke="#3f6fc0" stroke-width="2.2" stroke-opacity="0.8"/><path d="M380,536V642M808,536V642" stroke="#3d6ab4" stroke-width="2.6" fill="none" stroke-opacity="0.8"/><path d="M470,292C520,258 560,262 600,295C650,335 690,385 722,440" fill="none" stroke="#c8ccd4" stroke-width="2.2" stroke-opacity="0.8"/><ellipse cx="598" cy="293" rx="13" ry="18" fill="#f4f4f4" stroke="#888" stroke-width="2.5" transform="rotate(-25 598 293)"/><ellipse cx="598" cy="293" rx="4" ry="6" fill="#bbb" transform="rotate(-25 598 293)"/><path d="M597,470V590" stroke="#2c4f9a" stroke-width="2.4"/><path d="M597,408L628,438H611V466H583V438H566Z" fill="#18a6e4" stroke="#fff" stroke-width="11" stroke-linejoin="round"/><path d="M597,408L628,438H611V466H583V438H566Z" fill="#18a6e4" stroke="#123a70" stroke-width="2.2" stroke-linejoin="round"/><text x="597" y="523" font-size="32" text-anchor="middle" fill="#2c5cb0" font-family="Liberation Sans, sans-serif">10.00</text></g></svg></div><div id="ttptr"></div>
<div id="viewcube"><svg class="abs" style="left:1505px;top:112px;" width="88" height="88" viewBox="1505 112 88 88"><g transform="translate(1490,100) scale(0.11677)"><defs><radialGradient id="vcs" cx="0.5" cy="0.5" r="0.5"><stop offset="0" stop-color="#000" stop-opacity="0.22"/><stop offset="0.6" stop-color="#000" stop-opacity="0.1"/><stop offset="1" stop-color="#000" stop-opacity="0"/></radialGradient><linearGradient id="vcf" x1="0" y1="0" x2="0" y2="1"><stop offset="0" stop-color="#f2f2f2"/><stop offset="1" stop-color="#e2e2e2"/></linearGradient><linearGradient id="vcr" x1="0" y1="0" x2="0" y2="1"><stop offset="0" stop-color="#f4f4f4"/><stop offset="1" stop-color="#dcdcdc"/></linearGradient></defs><ellipse cx="500" cy="600" rx="330" ry="150" fill="url(#vcs)"/><path d="M490,168L740,283L490,415L245,285Z" fill="#efefef" stroke="#9a9a9a" stroke-width="3" stroke-linejoin="round" /><path d="M245,285L490,415L490,705L262,555Z" fill="url(#vcf)" stroke="#9a9a9a" stroke-width="3" stroke-linejoin="round" /><path d="M490,415L740,283L715,570L490,705Z" fill="url(#vcr)" stroke="#9a9a9a" stroke-width="3" stroke-linejoin="round" /><circle cx="490" cy="425" r="48" fill="#e4e8f2" fill-opacity="0.7"/><path d="M490,415V705" stroke="#8a8a8a" stroke-width="3"/><path d="M228,232L262,555" stroke="#6a6af6" stroke-width="14" stroke-linecap="round"/><path d="M262,558L530,752" stroke="#f69696" stroke-width="12" stroke-linecap="round"/><text transform="matrix(0.9,0.48,0.06,1,300,400)" x="0" y="125" font-size="135" fill="#7e8692" font-family="Liberation Sans, Noto Sans CJK JP, sans-serif" font-weight="400">前</text><text transform="matrix(0.9,-0.5,-0.06,1,540,440)" x="0" y="125" font-size="135" fill="#7e8692" font-family="Liberation Sans, Noto Sans CJK JP, sans-serif" font-weight="400">右</text><text transform="matrix(0.88,0.44,-0.92,0.45,492,205)" x="0" y="125" font-size="160" fill="#7e8692" font-family="Liberation Sans, Noto Sans CJK JP, sans-serif" font-weight="400">上</text><text x="188" y="212" font-size="92" fill="#7272f4" font-family="Liberation Sans, sans-serif">Z</text><text x="540" y="822" font-size="92" fill="#f48a8a" font-family="Liberation Sans, sans-serif">X</text></g></svg></div>
<div id="dialog"><div id="dlghead"></div><svg class="abs" style="left:1px;top:5px;" width="5" height="10" viewBox="-0.30 -0.70 5 10"><path d="M0.4,0V7.6M2.4,0V7.6" stroke="#888" stroke-width="0.8"/></svg><svg class="abs" style="left:9px;top:5px;" width="9" height="10" viewBox="-0.30 -0.70 9 10"><circle cx="3.8" cy="3.8" r="3.8" fill="#222"/><rect x="1.6" y="3.1" width="4.4" height="1.4" fill="#f2f2f2"/></svg><span class="t" style="left:19.9px;top:4.4px;font-size:9.5px;font-weight:400;color:#3a3a3a;transform:scaleX(0.831);">押し出し</span><svg class="abs" style="left:195px;top:7px;" width="10" height="7" viewBox="0.00 -0.40 10 7"><path d="M0,0L4.2,2.4L0,4.8ZM4.4,0L8.6,2.4L4.4,4.8Z" fill="#222"/></svg><span class="t" style="left:9.6px;top:27.6px;font-size:9.5px;font-weight:400;color:#3a3a3a;transform:scaleX(0.673);">タイプ</span><span class="t" style="left:9.6px;top:52.9px;font-size:9.5px;font-weight:400;color:#3a3a3a;transform:scaleX(0.656);">プロファイル</span><span class="t" style="left:9.6px;top:77.4px;font-size:9.5px;font-weight:400;color:#3a3a3a;transform:scaleX(0.915);">開始</span><span class="t" style="left:9.6px;top:102.6px;font-size:9.5px;font-weight:400;color:#3a3a3a;transform:scaleX(0.941);">方向</span><span class="t" style="left:9.6px;top:127.4px;font-size:9.5px;font-weight:400;color:#3a3a3a;transform:scaleX(0.793);">範囲のタイプ</span><span class="t" style="left:9.6px;top:161.1px;font-size:9.5px;font-weight:400;color:#3a3a3a;transform:scaleX(0.941);">操作</span><svg class="abs" style="left:66px;top:21px;" width="20" height="23" viewBox="1455 222 20 23"><g transform="translate(1380,195) scale(0.13749)"><rect x="548" y="198" width="140" height="163" fill="#0d95d8"/><path d="M570,252L585,235L640,235L628,252Z" fill="#b4defa" /><path d="M570,252L628,252L628,318L570,318Z" fill="#8ccaf6" /><path d="M628,252L640,235L640,305L628,318Z" fill="#5aa8e4" /><path d="M570,318L628,318L640,305L640,314L628,328L570,328Z" fill="#ece8dc" /><path d="M660,305V245" stroke="#fff" stroke-width="6"/><path d="M652,250L660,232L668,250Z" fill="#fff"/></g></svg><svg class="abs" style="left:93px;top:25px;" width="15" height="15" viewBox="1482 226 15 15"><g transform="translate(1380,195) scale(0.13749)"><path d="M750,252L766,237L822,235L806,252Z" fill="#a4d2f7" /><path d="M750,252L806,252L806,318L750,318Z" fill="#5b9be0" /><path d="M806,252L822,235L822,302L806,318Z" fill="#3a7cc8" /><path d="M748,324q14,-13 28,0q14,13 28,0l18,-16" fill="none" stroke="#8a8a8a" stroke-width="5"/><path d="M836,305V245" stroke="#222" stroke-width="5"/><path d="M829,250L836,230L843,250Z" fill="#222"/></g></svg><div class="abs" style="left:0;top:0;width:40.8px;height:22.5px;transform:translate(66.40px,46.00px);background:#0d95d8"></div><svg class="abs" style="left:71px;top:50px;" width="11" height="15" viewBox="1460 251 11 15"><g transform="translate(1380,195) scale(0.13749)"><path d="M597,418V492L614,476L628,505L640,499L626,470L650,468Z" fill="#e8e8e8" stroke="#333" stroke-width="5" stroke-linejoin="round"/></g></svg><span class="t" style="left:84.2px;top:52.6px;font-size:9.5px;font-weight:400;color:#fff;transform:scaleX(0.883);">選択</span><div class="dd" style="left:0;top:0;width:114.2px;height:22.0px;transform:translate(66.40px,71.40px);"></div><svg class="abs" style="left:171px;top:80px;" width="6" height="5" viewBox="0.00 -0.75 6 5"><path d="M0,0H5L2.5,3.2Z" fill="#222"/></svg><div class="dd" style="left:0;top:0;width:114.2px;height:22.0px;transform:translate(66.40px,96.50px);"></div><svg class="abs" style="left:171px;top:105px;" width="6" height="5" viewBox="0.00 -0.80 6 5"><path d="M0,0H5L2.5,3.2Z" fill="#222"/></svg><div class="dd" style="left:0;top:0;width:114.2px;height:22.0px;transform:translate(66.40px,121.60px);"></div><svg class="abs" style="left:171px;top:130px;" width="6" height="6" viewBox="0.00 -0.85 6 6"><path d="M0,0H5L2.5,3.2Z" fill="#222"/></svg><div class="dd" style="left:0;top:0;width:114.2px;height:22.0px;transform:translate(66.40px,154.60px);"></div><svg class="abs" style="left:171px;top:163px;" width="6" height="6" viewBox="0.00 -0.95 6 6"><path d="M0,0H5L2.5,3.2Z" fill="#222"/></svg><svg class="abs" style="left:71px;top:75px;" width="10" height="14" viewBox="1460 276 10 14"><g transform="translate(1380,195) scale(0.13749)"><path d="M594,595V685" stroke="#1c2f66" stroke-width="8"/><path d="M598,640H632" stroke="#222" stroke-width="5"/><path d="M628,628L648,640L628,652Z" fill="#222"/></g></svg><span class="t" style="left:85.6px;top:77.4px;font-size:9.5px;font-weight:400;color:#3a3a3a;transform:scaleX(0.729);">プロファイル平面</span><svg class="abs" style="left:68px;top:99px;" width="15" height="16" viewBox="1457 300 15 16"><g transform="translate(1380,295) scale(0.14021)"><path d="M590,50L650,62L645,112L600,98Z" fill="#f0a878" /><path d="M565,128L622,78" stroke="#444" stroke-width="6"/><path d="M556,136L562,114L580,130Z" fill="#444"/><path d="M630,70L610,76L622,92Z" fill="#444"/></g></svg><span class="t" style="left:86.0px;top:102.6px;font-size:9.5px;font-weight:400;color:#3a3a3a;transform:scaleX(0.894);">片側</span><svg class="abs" style="left:68px;top:125px;" width="16" height="14" viewBox="1457 326 16 14"><g transform="translate(1380,295) scale(0.14021)"><path d="M562,228V313M652,228V313" stroke="#1c2f66" stroke-width="8"/><path d="M580,270H634" stroke="#222" stroke-width="5"/><path d="M568,270L586,260V280ZM646,270L628,260V280Z" fill="#222"/></g></svg><span class="t" style="left:86.0px;top:127.6px;font-size:9.5px;font-weight:400;color:#3a3a3a;transform:scaleX(0.894);">距離</span><svg class="abs" style="left:68px;top:158px;" width="15" height="15" viewBox="1457 359 15 15"><g transform="translate(1380,295) scale(0.14021)"><path d="M560,495V535C560,560 632,560 632,535V495" fill="#dedede" stroke="#777" stroke-width="5"/><ellipse cx="596" cy="495" rx="36" ry="14" fill="#f4f4f4" stroke="#777" stroke-width="5"/><path d="M626.0,464.0L630.6,478.9L644.4,471.6L637.1,485.4L652.0,490.0L637.1,494.6L644.4,508.4L630.6,501.1L626.0,516.0L621.4,501.1L607.6,508.4L614.9,494.6L600.0,490.0L614.9,485.4L607.6,471.6L621.4,478.9Z" fill="#ffa400" /></g></svg><span class="t" style="left:86.0px;top:160.9px;font-size:9.5px;font-weight:400;color:#3a3a3a;transform:scaleX(0.801);">新規ボディ</span><div class="abs" style="left:0;top:0;width:195.0px;height:1.0px;transform:translate(1.00px,149.20px);background:#cfcfcf"></div><div class="abs" style="left:0;top:0;width:207.0px;height:1.0px;transform:translate(0.00px,178.60px);background:#cfcfcf"></div><svg class="abs" style="left:6px;top:190px;" width="12" height="12" viewBox="-0.40 0.00 12 12"><circle cx="5.2" cy="5.2" r="5.2" fill="#111"/><rect x="4.3" y="4.3" width="1.9" height="4" fill="#fff"/><rect x="3.6" y="4.3" width="1.6" height="1" fill="#fff"/><rect x="3.6" y="7.5" width="3.3" height="1" fill="#fff"/><circle cx="5.2" cy="2.7" r="1.05" fill="#fff"/></svg><div class="btn" style="left:0;top:0;width:50.0px;height:16.0px;transform:translate(89.00px,186.60px);background:#e9e9e9;border-color:#cdcdcd"></div><span class="t" style="left:106.7px;top:189.4px;font-size:10.5px;font-weight:400;color:#b4b4b4;font-family:'Liberation Sans',sans-serif;transform:scaleX(0.929);">OK</span><div class="btn" style="left:0;top:0;width:50.0px;height:16.0px;transform:translate(147.80px,186.60px);background:#f3f3f3;border-color:#bdbdbd"></div><span class="t" style="left:152.3px;top:189.9px;font-size:9.5px;font-weight:400;color:#3a3a3a;transform:scaleX(0.814);">キャンセル</span></div>
<div id="comments"><span class="t" style="left:19.8px;top:4.5px;font-size:9.5px;font-weight:400;color:#555;transform:scaleX(0.673);">コメント</span><svg class="abs" style="left:231px;top:5px;" width="10" height="10" viewBox="-0.40 -0.40 10 10"><circle cx="4.1" cy="4.1" r="4.1" fill="#222"/><path d="M4.1,1.8V6.4M1.8,4.1H6.4" stroke="#f2f2f2" stroke-width="1.2"/></svg><svg class="abs" style="left:244px;top:5px;" width="5" height="10" viewBox="-0.40 -0.60 5 10"><path d="M0.5,0V7.6M2.5,0V7.6" stroke="#888" stroke-width="0.8"/></svg></div><div id="navbar"><svg class="abs" style="left:1px;top:2px;" width="17" height="16" viewBox="702 792 17 16"><g transform="translate(695,782) scale(0.13125)"><ellipse cx="113" cy="135" rx="50" ry="22" fill="none" stroke="#555" stroke-width="6" transform="rotate(12 113 135)"/><ellipse cx="113" cy="137" rx="20" ry="50" fill="none" stroke="#555" stroke-width="6" transform="rotate(8 113 137)"/><path d="M113,120V146M100,133H126" stroke="#2a86e0" stroke-width="7"/><path d="M150,118L166,128L150,140Z" fill="#555"/></g></svg><svg class="abs" style="left:29px;top:3px;" width="16" height="15" viewBox="730 793 16 15"><g transform="translate(695,782) scale(0.13125)"><path d="M278,120L300,92L318,112L352,92L372,120" fill="#666" stroke="#555" stroke-width="4"/><rect x="278" y="120" width="95" height="65" fill="#f4f4f4" stroke="#555" stroke-width="6"/><rect x="296" y="140" width="60" height="24" fill="#aaa" stroke="#555" stroke-width="5"/></g></svg><svg class="abs" style="left:51px;top:2px;" width="15" height="16" viewBox="752 792 15 16"><g transform="translate(695,782) scale(0.13125)"><path d="M462,130V108Q470,96 478,108V98Q487,86 495,98V100Q504,90 512,102V112Q522,104 528,116V150Q526,172 512,186H474Q460,170 444,146Q442,134 452,134Z" fill="#f6f6f6" stroke="#444" stroke-width="5.5" stroke-linejoin="round"/><path d="M478,108V138M495,100V138M512,104V140" stroke="#444" stroke-width="5"/></g></svg><svg class="abs" style="left:72px;top:2px;" width="16" height="16" viewBox="773 792 16 16"><g transform="translate(695,782) scale(0.13125)"><circle cx="634" cy="130" r="28" fill="#eef6fa" stroke="#555" stroke-width="7"/><path d="M655,152L682,178" stroke="#444" stroke-width="11" stroke-linecap="round"/><path d="M692,88V120M676,104H708M678,130H706" stroke="#444" stroke-width="5"/></g></svg><svg class="abs" style="left:94px;top:2px;" width="16" height="16" viewBox="795 792 16 16"><g transform="translate(695,782) scale(0.13125)"><rect x="772" y="90" width="92" height="94" fill="none" stroke="#555" stroke-width="4" stroke-dasharray="7 7"/><circle cx="808" cy="126" r="36" fill="#e4f0f6" stroke="#555" stroke-width="7"/><path d="M834,154L862,182" stroke="#444" stroke-width="12" stroke-linecap="round"/></g></svg><svg class="abs" style="left:121px;top:2px;" width="17" height="16" viewBox="822 792 17 16"><g transform="translate(695,782) scale(0.13125)"><rect x="980" y="90" width="98" height="74" rx="8" fill="#8fb0e0" stroke="#666" stroke-width="7"/><rect x="992" y="101" width="74" height="52" fill="#9dbcee" stroke="#4468a8" stroke-width="3"/><path d="M1018,166V178H1040V166M1002,182H1058" stroke="#666" stroke-width="7" fill="none"/></g></svg><svg class="abs" style="left:147px;top:2px;" width="16" height="16" viewBox="848 792 16 16"><g transform="translate(695,782) scale(0.13125)"><rect x="1176" y="90" width="100" height="94" fill="#f4f4f4" stroke="#555" stroke-width="6"/><path d="M1196,90V184" stroke="#666" stroke-width="5"/><path d="M1216,90V184" stroke="#666" stroke-width="5"/><path d="M1236,90V184" stroke="#666" stroke-width="5"/><path d="M1256,90V184" stroke="#666" stroke-width="5"/><path d="M1176,109H1276" stroke="#666" stroke-width="5"/><path d="M1176,128H1276" stroke="#666" stroke-width="5"/><path d="M1176,147H1276" stroke="#666" stroke-width="5"/><path d="M1176,166H1276" stroke="#666" stroke-width="5"/></g></svg><svg class="abs" style="left:173px;top:3px;" width="15" height="12" viewBox="874 793 15 12"><g transform="translate(695,782) scale(0.13125)"><rect x="1374" y="96" width="92" height="74" fill="#7ea2d8" stroke="#3f5f9a" stroke-width="7"/><path d="M1420,96V170M1374,133H1466" stroke="#3f5f9a" stroke-width="7"/></g></svg><svg class="abs" style="left:20px;top:8px;" width="6" height="4" viewBox="-0.20 0.00 6 4"><path d="M0,0H4.4L2.2,3Z" fill="#222"/></svg><svg class="abs" style="left:112px;top:8px;" width="7" height="4" viewBox="-0.80 0.00 7 4"><path d="M0,0H4.4L2.2,3Z" fill="#222"/></svg><svg class="abs" style="left:138px;top:8px;" width="6" height="4" viewBox="-0.20 0.00 6 4"><path d="M0,0H4.4L2.2,3Z" fill="#222"/></svg><svg class="abs" style="left:164px;top:8px;" width="6" height="4" viewBox="0.00 0.00 6 4"><path d="M0,0H4.4L2.2,3Z" fill="#222"/></svg><svg class="abs" style="left:189px;top:8px;" width="7" height="4" viewBox="-0.60 0.00 7 4"><path d="M0,0H4.4L2.2,3Z" fill="#222"/></svg></div><div id="timeline"><svg class="abs" style="left:9px;top:14px;" width="12" height="13" viewBox="0.00 -0.50 12 13"><rect x="0" y="0" width="1.8" height="11.5" fill="#555"/><path d="M10.2,0V11.5L1.8,5.75Z" fill="#555"/></svg><svg class="abs" style="left:29px;top:15px;" width="12" height="12" viewBox="-0.40 0.00 12 12"><path d="M8,0V10.5L0,5.25Z" fill="#555"/><rect x="8.6" y="2.8" width="2" height="5" fill="#555"/></svg><svg class="abs" style="left:51px;top:13px;" width="11" height="15" viewBox="0.00 -0.50 11 15"><path d="M0,0L9.8,6.75L0,13.5Z" fill="#555"/></svg><svg class="abs" style="left:70px;top:15px;" width="13" height="12" viewBox="-0.60 0.00 13 12"><rect x="0" y="2.8" width="2" height="5" fill="#555"/><path d="M2.6,0V10.5L10.6,5.25Z" fill="#555"/></svg><svg class="abs" style="left:92px;top:14px;" width="12" height="13" viewBox="-0.20 -0.50 12 13"><path d="M0,0V11.5L8.4,5.75Z" fill="#555"/><rect x="8.4" y="0" width="1.8" height="11.5" fill="#555"/></svg><svg class="abs" style="left:121px;top:12px;" width="16" height="23" viewBox="121 826 16 23"><g transform="translate(0,780) scale(0.12500)"><path d="M982,383H1068V430M982,383V467H1030" fill="none" stroke="#8a8a8a" stroke-width="6"/><rect x="974" y="375" width="13" height="13" fill="#2a86e0"/><rect x="1062" y="375" width="13" height="13" fill="#2a86e0"/><rect x="974" y="461" width="13" height="13" fill="#2a86e0"/><path d="M1040,468L1070,440" stroke="#f2b23a" stroke-width="12"/><circle cx="1072" cy="437" r="7" fill="#e8403a"/><path d="M1030,478L1040,462L1046,470Z" fill="#555"/><path d="M1033,505V548" stroke="#bdbdbd" stroke-width="3"/></g></svg><svg class="abs" style="left:133px;top:8px;" width="12" height="28" viewBox="0.00 -0.20 12 28"><path d="M0.4,0H10.2Q10.6,0 10.6,0.6V2L6.2,6.8V26.4H4.4V6.8L0,2V0.6Q0,0 0.4,0Z" fill="#555"/></svg><svg class="abs" style="left:1575px;top:13px;" width="16" height="16" viewBox="-0.70 -0.40 16 16"><g transform="translate(6.9,6.9)"><rect x="-1.6" y="-6.9" width="3.2" height="3.4" fill="#8c8c8c" transform="rotate(0)"/><rect x="-1.6" y="-6.9" width="3.2" height="3.4" fill="#8c8c8c" transform="rotate(45)"/><rect x="-1.6" y="-6.9" width="3.2" height="3.4" fill="#8c8c8c" transform="rotate(90)"/><rect x="-1.6" y="-6.9" width="3.2" height="3.4" fill="#8c8c8c" transform="rotate(135)"/><rect x="-1.6" y="-6.9" width="3.2" height="3.4" fill="#8c8c8c" transform="rotate(180)"/><rect x="-1.6" y="-6.9" width="3.2" height="3.4" fill="#8c8c8c" transform="rotate(225)"/><rect x="-1.6" y="-6.9" width="3.2" height="3.4" fill="#8c8c8c" transform="rotate(270)"/><rect x="-1.6" y="-6.9" width="3.2" height="3.4" fill="#8c8c8c" transform="rotate(315)"/><circle r="4.8" fill="#8c8c8c"/><circle r="2.1" fill="#f2f2f2"/></g></svg></div><div id="botline"></div>
<div id="annot"><svg class="abs" style="left:136px;top:32px" width="58" height="60" viewBox="136 32 58 60"><rect x="139.6" y="34.6" width="50.2" height="54" fill="none" stroke="#ff0000" stroke-width="2.8" stroke-dasharray="10 5"/></svg><span class="t" style="left:209.4px;top:22.2px;font-size:25.5px;font-weight:500;color:#ff0000;font-family:'Liberation Sans','Noto Sans CJK JP',sans-serif;transform:scaleX(1.097);">①</span><span class="t" style="left:243.0px;top:21.9px;font-size:25px;font-weight:700;color:#ff0000;font-family:'Liberation Sans','Noto Sans CJK JP',sans-serif;transform:scaleX(1.062);">クリック</span><span class="t" style="left:347.8px;top:22.4px;font-size:28px;font-weight:400;color:#ff0000;font-family:'Liberation Sans','Noto Sans CJK JP',sans-serif;transform:scaleX(0.999);">。</span><span class="t" style="left:857.6px;top:404.4px;font-size:25.5px;font-weight:500;color:#ff0000;font-family:'Liberation Sans','Noto Sans CJK JP',sans-serif;transform:scaleX(1.097);">②</span><span class="t" style="left:891.1px;top:404.3px;font-size:25px;font-weight:700;color:#ff0000;font-family:'Liberation Sans','Noto Sans CJK JP',sans-serif;transform:scaleX(1.062);">クリック</span><span class="t" style="left:996.4px;top:404.4px;font-size:28px;font-weight:400;color:#ff0000;font-family:'Liberation Sans','Noto Sans CJK JP',sans-serif;transform:scaleX(0.999);">。</span><svg class="abs" style="left:770px;top:430px" width="95" height="125" viewBox="770 430 95 125"><path d="M859.3,434.5L789,531" stroke="#ff0000" stroke-width="3.8" fill="none"/><path d="M775.1,549.9L780,522.4L799.8,537.3Z" fill="#ff0000"/></svg></div>
</div></body></html>
